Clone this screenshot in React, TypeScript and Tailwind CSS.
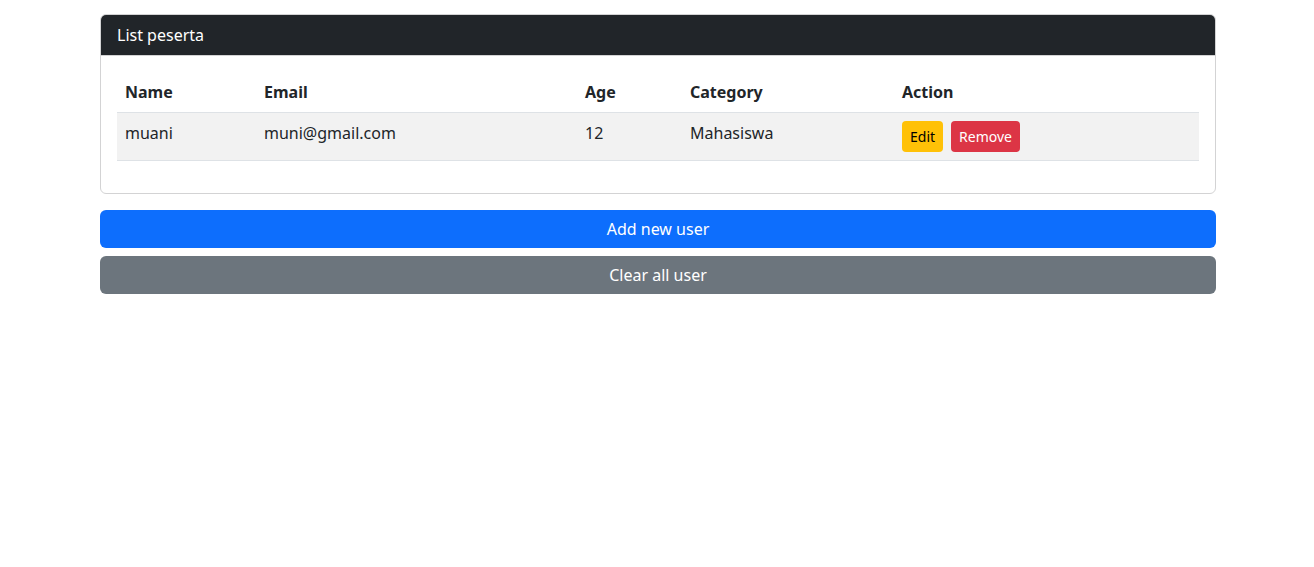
const users = [
  { name: 'muani', email: 'muni@gmail.com', age: 12, category: 'Mahasiswa' },
];

export default function App() {
  return (
    <div className="min-h-screen bg-white text-[#212529] font-['Noto_Sans',sans-serif] text-base">
      <div className="mx-auto w-[1140px] pl-[13px] pr-[11px] pt-[14px]">
        <div className="rounded-md border border-[#d3d3d4] overflow-hidden">
          <div className="bg-[#212529] text-white px-4 py-2 leading-6 border-b border-[#d3d3d4]">
            List peserta
          </div>
          <div className="p-4">
            <table className="w-full mb-4 border-collapse text-left">
              <thead>
                <tr className="border-b border-[#dee2e6]">
                  <th className="w-[139px] p-2 leading-6 font-bold">Name</th>
                  <th className="w-[321px] p-2 leading-6 font-bold">Email</th>
                  <th className="w-[105px] p-2 leading-6 font-bold">Age</th>
                  <th className="w-[212px] p-2 leading-6 font-bold">Category</th>
                  <th className="p-2 leading-6 font-bold">Action</th>
                </tr>
              </thead>
              <tbody>
                {users.map((u) => (
                  <tr key={u.email} className="bg-[#f2f2f2] border-b border-[#dee2e6]">
                    <td className="p-2 leading-6 align-top">{u.name}</td>
                    <td className="p-2 leading-6 align-top">{u.email}</td>
                    <td className="p-2 leading-6 align-top">{u.age}</td>
                    <td className="p-2 leading-6 align-top">{u.category}</td>
                    <td className="p-2 align-top">
                      <div className="flex gap-2">
                        <button className="h-[31px] px-2 rounded bg-[#ffc107] text-black text-sm">Edit</button>
                        <button className="h-[31px] px-2 rounded bg-[#dc3545] text-white text-sm">Remove</button>
                      </div>
                    </td>
                  </tr>
                ))}
              </tbody>
            </table>
          </div>
        </div>

        <div className="mt-4 flex flex-col gap-2">
          <button className="h-[38px] w-full rounded-md bg-[#0d6efd] text-white">Add new user</button>
          <button className="h-[38px] w-full rounded-md bg-[#6c757d] text-white">Clear all user</button>
        </div>
      </div>
    </div>
  );
}
